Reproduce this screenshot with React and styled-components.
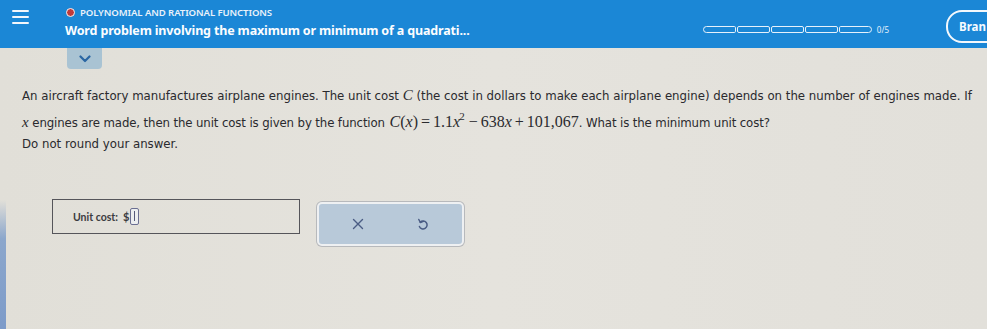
import React from "react";
import styled, { createGlobalStyle } from "styled-components";

const Global = createGlobalStyle`
  html, body { margin: 0; padding: 0; background: #e3e1db; }
  * { box-sizing: border-box; }
`;

const Page = styled.div`
  width: 987px;
  height: 329px;
  overflow: hidden;
  background: linear-gradient(90deg, #e1dfd8 0%, #e5e3dd 50%, #e2e0da 100%);
  position: relative;
  font-family: "DejaVu Sans", Verdana, sans-serif;
`;

const TopBar = styled.header`
  height: 48px;
  background: #1b87d6;
  display: flex;
  align-items: center;
  color: #fff;
`;

const Burger = styled.div`
  width: 65px;
  height: 100%;
  display: flex;
  flex-direction: column;
  justify-content: flex-start;
  gap: 4px;
  padding: 10px 0 0 12px;
  span {
    display: block;
    width: 17px;
    height: 2px;
    background: #f2f6fb;
    border-radius: 1px;
  }
`;

const Titles = styled.div`
  display: flex;
  flex-direction: column;
  gap: 3px;
  margin-top: -4px;
  flex: 1;
  font-family: "Noto Sans", "DejaVu Sans", sans-serif;
`;

const Topic = styled.div`
  display: flex;
  align-items: center;
  gap: 5px;
  font-size: 9.6px;
  font-weight: 600;
  letter-spacing: -0.1px;
  color: #eaf2fa;
  margin-left: 1px;
`;

const Dot = styled.span`
  width: 9px;
  height: 9px;
  border-radius: 50%;
  background: #c0393b;
  border: 1.5px solid #f3f3f3;
`;

const Title = styled.div`
  font-size: 12.5px;
  font-weight: 700;
  letter-spacing: -0.15px;
  color: #fbfdff;
`;

const Progress = styled.div`
  display: flex;
  align-items: center;
  gap: 1px;
  margin-right: 57px;
  margin-top: 11px;
`;

const Seg = styled.span`
  width: 33px;
  height: 7px;
  border: 1.5px solid #e6f1fb;
  border-radius: ${(p) => (p.$first ? "4px 2px 2px 4px" : p.$last ? "2px 4px 4px 2px" : "2px")};
`;

const ProgText = styled.span`
  font-size: 8px;
  margin-left: 4px;
  color: #e6f1fb;
  font-family: "Noto Sans", sans-serif;
`;

const BrandBtn = styled.div`
  align-self: flex-start;
  margin-top: 10px;
  height: 33px;
  width: 60px;
  margin-right: -19px;
  border: 2px solid #f4f8fc;
  border-radius: 16px;
  display: flex;
  align-items: center;
  padding-left: 11px;
  font-family: "Noto Sans", sans-serif;
  font-weight: 700;
  font-size: 11.5px;
  color: #f7fbff;
`;

const Tab = styled.div`
  margin-left: 67px;
  width: 35px;
  height: 21px;
  background: #a9c3d3;
  border-radius: 0 0 4px 4px;
  display: flex;
  align-items: center;
  justify-content: center;
`;

const Question = styled.div`
  padding: 16px 0 0 22px;
  font-size: 11.75px;
  line-height: 21px;
  color: #2a2a2e;
  white-space: nowrap;
  p { margin: 0; }
`;

const Line = styled.p`
  letter-spacing: ${(p) => (p.$tight ? "-0.12px" : "0")};
`;

const Note = styled.p``;

const Formula = styled.span`
  font-family: "Liberation Serif", "Times New Roman", serif;
  font-size: 16px;
  letter-spacing: 0;
  margin-left: 1px;
`;

const I = styled.i`
  font-family: "Liberation Serif", "Times New Roman", serif;
  font-size: 15px;
  letter-spacing: 0;
`;

const Op = styled.span`
  margin: 0 3px;
`;

const Sup = styled.sup`
  font-size: 11px;
  position: relative;
  top: -1px;
  margin-left: -1px;
  margin-right: 1px;
`;

const AnswerRow = styled.div`
  display: flex;
  align-items: flex-start;
  gap: 17px;
  padding: 44px 0 0 52px;
`;

const AnswerBox = styled.div`
  width: 248px;
  height: 35px;
  border: 1.5px solid #55555a;
  display: flex;
  align-items: center;
  padding-left: 20px;
  font-size: 10.5px;
  color: #3b3b40;
  font-family: "Lato", "Noto Sans", sans-serif;
  font-weight: 700;
`;

const Dollar = styled.span`
  margin-left: 5px;
  font-size: 11px;
`;

const Blank = styled.span`
  display: inline-block;
  width: 9px;
  height: 17px;
  border: 1.5px solid #6b6f92;
  border-radius: 2px;
  margin-left: 1px;
  background: #eceef0;
  position: relative;
  &::after {
    content: "";
    position: absolute;
    left: 2.5px;
    top: 2px;
    width: 1px;
    height: 10px;
    background: #555a7a;
  }
`;

const BtnGroup = styled.div`
  margin-top: 3px;
  width: 147px;
  height: 44px;
  background: #b8c9d9;
  border: 2px solid #eef0f2;
  border-radius: 5px;
  box-shadow: 0 0 0 1px #b7b9bc;
  display: flex;
  align-items: center;
  justify-content: space-between;
  padding: 0 31px;
`;

const IconBtn = styled.button`
  background: none;
  border: none;
  padding: 0;
  width: 16px;
  height: 16px;
  display: flex;
  align-items: center;
  justify-content: center;
`;

const EdgeGlow = styled.div`
  position: absolute;
  left: 0;
  top: 200px;
  bottom: 0;
  width: 6px;
  background: linear-gradient(180deg, rgba(130,160,205,0) 0%, #8ca7cc 30%, #7d9bc9 100%);
`;

export default function App() {
  return (
    <Page>
      <Global />
      <TopBar>
        <Burger>
          <span />
          <span />
          <span />
        </Burger>
        <Titles>
          <Topic>
            <Dot />
            POLYNOMIAL AND RATIONAL FUNCTIONS
          </Topic>
          <Title>Word problem involving the maximum or minimum of a quadrati...</Title>
        </Titles>
        <Progress>
          <Seg $first />
          <Seg />
          <Seg />
          <Seg />
          <Seg $last />
          <ProgText>0/5</ProgText>
        </Progress>
        <BrandBtn>Bran</BrandBtn>
      </TopBar>
      <Tab>
        <svg width="12" height="8" viewBox="0 0 12 8">
          <path d="M1.5 1.5 L6 6 L10.5 1.5" fill="none" stroke="#2a66a3" strokeWidth="2.2" strokeLinecap="round" strokeLinejoin="round" />
        </svg>
      </Tab>
      <Question>
        <Line>
          An aircraft factory manufactures airplane engines. The unit cost <I>C</I> (the cost in dollars to make each airplane engine) depends on the number of engines made. If
        </Line>
        <Line $tight>
          <I>x</I> engines are made, then the unit cost is given by the function{" "}
          <Formula>
            <i>C</i>(<i>x</i>)<Op>=</Op>1.1<i>x</i><Sup>2</Sup><Op>−</Op>638<i>x</i><Op>+</Op>101,067
          </Formula>
          . What is the minimum unit cost?
        </Line>
        <Note>Do not round your answer.</Note>
      </Question>
      <AnswerRow>
        <AnswerBox>
          Unit cost:
          <Dollar>$</Dollar>
          <Blank />
        </AnswerBox>
        <BtnGroup>
          <IconBtn aria-label="clear">
            <svg width="12" height="12" viewBox="0 0 12 12">
              <path d="M1.5 1.5 L10.5 10.5 M10.5 1.5 L1.5 10.5" stroke="#4a5c84" strokeWidth="1.4" strokeLinecap="round" />
            </svg>
          </IconBtn>
          <IconBtn aria-label="undo">
            <svg width="12" height="13" viewBox="0 0 12 13">
              <path d="M3.2 4.2 A4 4 0 1 1 2.4 8.5" fill="none" stroke="#4a5c84" strokeWidth="1.5" strokeLinecap="round" />
              <path d="M1.8 1.5 L3.4 4.5 L6.4 3.4" fill="none" stroke="#4a5c84" strokeWidth="1.5" strokeLinecap="round" strokeLinejoin="round" />
            </svg>
          </IconBtn>
        </BtnGroup>
      </AnswerRow>
      <EdgeGlow />
    </Page>
  );
}
